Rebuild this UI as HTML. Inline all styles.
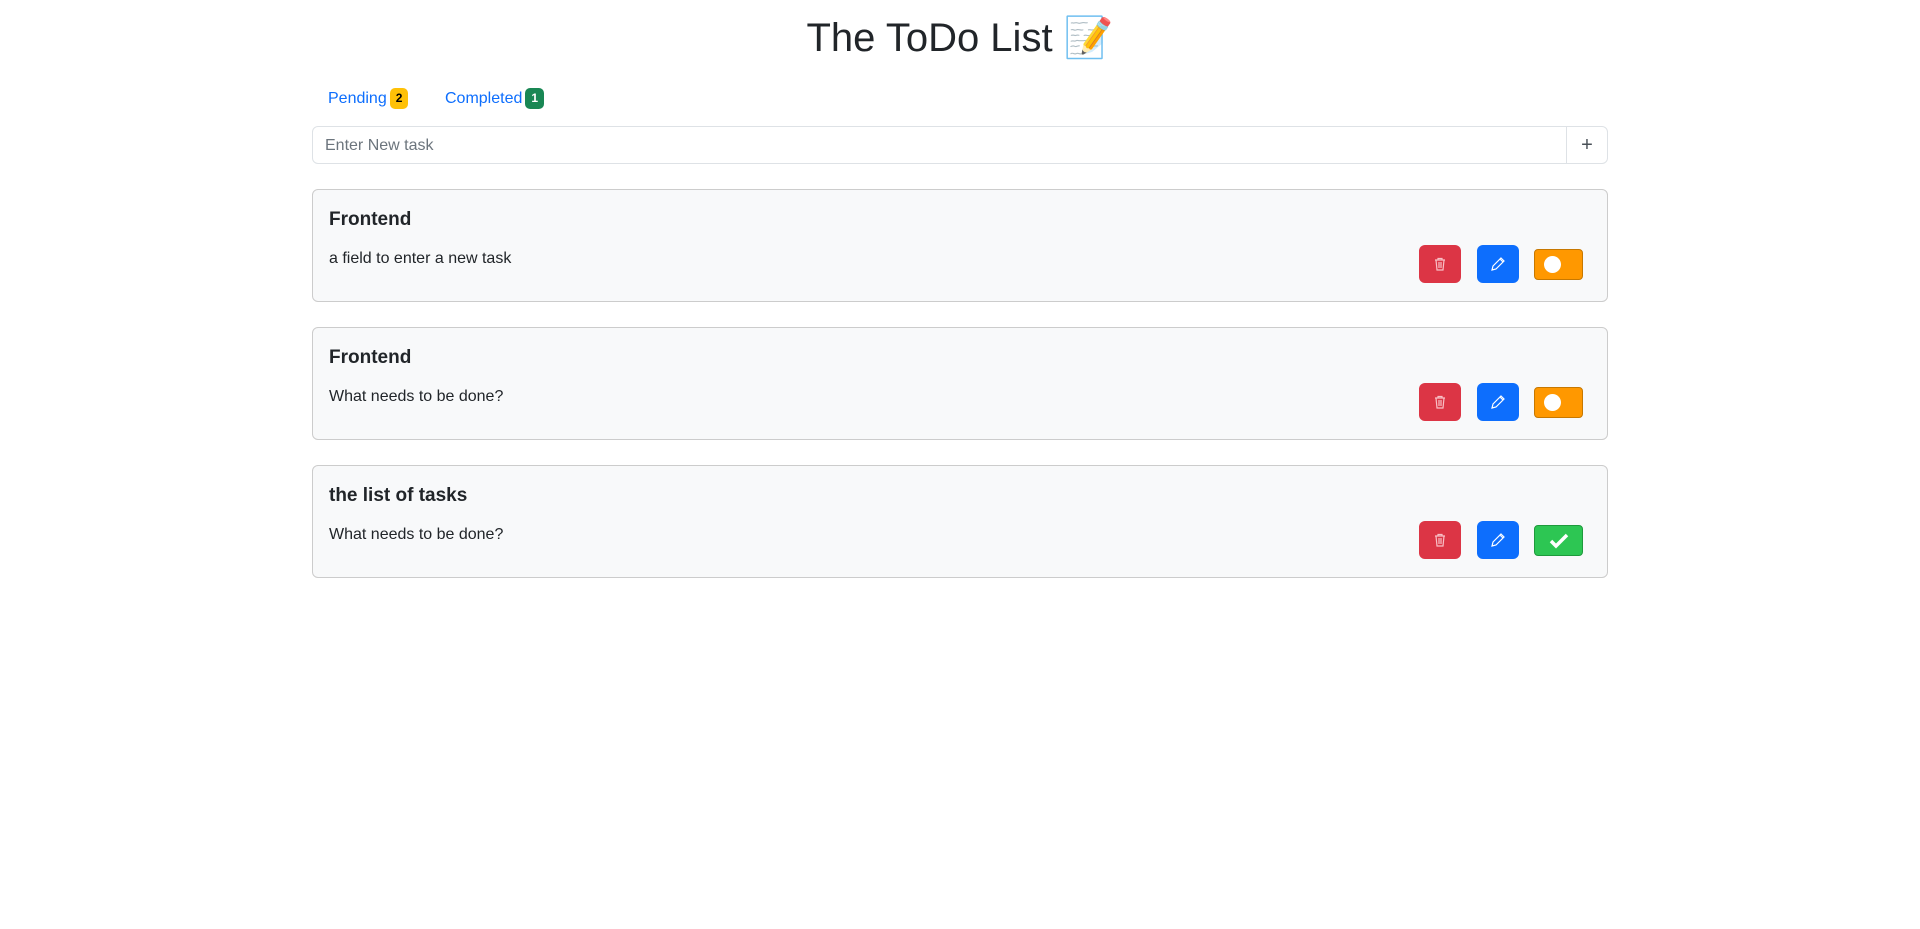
<!DOCTYPE html>
<html><head><meta charset="utf-8"><style>
body{margin:0;background:#fff;font-family:"Liberation Sans",sans-serif;color:#212529;width:1920px;height:929px;overflow:hidden}
h1{margin:0;position:absolute;top:14px;left:0;width:1920px;text-align:center;font-size:40px;font-weight:400;line-height:48px}
.tabs{position:absolute;top:87px;left:328px;font-size:16px;color:#0d6efd}
.tab{position:absolute;white-space:nowrap;line-height:24px}
.badge{display:inline-block;font-size:12px;font-weight:700;padding:0 6px;border-radius:5px;line-height:21px;vertical-align:1px;margin-left:3px}
.inp{position:absolute;left:312px;top:126px;width:1294px;height:36px;border:1px solid #dee2e6;border-radius:6px}
.inp span{position:absolute;left:12px;top:10px;color:#6c757d;font-size:16px}
.inp .plus{position:absolute;right:0;top:0;width:40px;height:36px;border-left:1px solid #dee2e6;text-align:center;line-height:36px;font-size:20px;color:#495057}
.card{position:absolute;left:312px;width:1294px;height:111px;border:1px solid #ccc;border-radius:6px;background:#f8f9fa}
.card .t{position:absolute;left:16px;top:18px;font-size:19px;font-weight:700;line-height:24px}
.card .d{position:absolute;left:16px;top:58px;font-size:16px;line-height:22px}
.b{position:absolute;top:55px;width:42px;height:38px;border-radius:6px;display:flex;align-items:center;justify-content:center}
.tr{left:1106px;background:#dc3545}.pe{left:1164px;background:#0d6efd}
.tg{position:absolute;left:1221px;top:59px;width:47px;height:29px;border:1px solid #c77800;border-radius:4px;background:#ff9800}
.tg i{position:absolute;left:9px;top:6px;width:17px;height:17px;border-radius:50%;background:#fff}
.ok{background:#2dc653;border-color:#1e9a3c}
</style></head><body>
<h1>The ToDo List 📝</h1>
<div class="tabs">
<div class="tab" style="left:0">Pending<span class="badge" style="background:#ffc107;color:#000">2</span></div>
<div class="tab" style="left:117px">Completed<span class="badge" style="background:#198754;color:#fff">1</span></div>
</div>
<div class="inp"><span>Enter New task</span><div class="plus">+</div></div>

<div class="card" style="top:189px"><div class="t">Frontend</div><div class="d">a field to enter a new task</div>
<div class="b tr"><svg width="16" height="16" viewBox="0 0 16 16" fill="none" stroke="#f8c0c6" stroke-width="1.2"><path d="M3 4h10M6 4V2.5h4V4M4 4l1 10h6l1-10M7 6v6M9 6v6"/></svg></div>
<div class="b pe"><svg width="16" height="16" viewBox="0 0 16 16" fill="none" stroke="#fff" stroke-width="1.2"><path d="M11 2l3 3-8 8-4 1 1-4z M10 3l3 3"/></svg></div>
<div class="tg"><i></i></div></div>

<div class="card" style="top:327px"><div class="t">Frontend</div><div class="d">What needs to be done?</div>
<div class="b tr"><svg width="16" height="16" viewBox="0 0 16 16" fill="none" stroke="#f8c0c6" stroke-width="1.2"><path d="M3 4h10M6 4V2.5h4V4M4 4l1 10h6l1-10M7 6v6M9 6v6"/></svg></div>
<div class="b pe"><svg width="16" height="16" viewBox="0 0 16 16" fill="none" stroke="#fff" stroke-width="1.2"><path d="M11 2l3 3-8 8-4 1 1-4z M10 3l3 3"/></svg></div>
<div class="tg"><i></i></div></div>

<div class="card" style="top:465px"><div class="t">the list of tasks</div><div class="d">What needs to be done?</div>
<div class="b tr"><svg width="16" height="16" viewBox="0 0 16 16" fill="none" stroke="#f8c0c6" stroke-width="1.2"><path d="M3 4h10M6 4V2.5h4V4M4 4l1 10h6l1-10M7 6v6M9 6v6"/></svg></div>
<div class="b pe"><svg width="16" height="16" viewBox="0 0 16 16" fill="none" stroke="#fff" stroke-width="1.2"><path d="M11 2l3 3-8 8-4 1 1-4z M10 3l3 3"/></svg></div>
<div class="tg ok"><svg style="position:absolute;left:14px;top:6px" width="20" height="17" viewBox="0 0 20 17"><path d="M2 9l5 5L18 3" fill="none" stroke="#fff" stroke-width="3.5"/></svg></div></div>
</body></html>
